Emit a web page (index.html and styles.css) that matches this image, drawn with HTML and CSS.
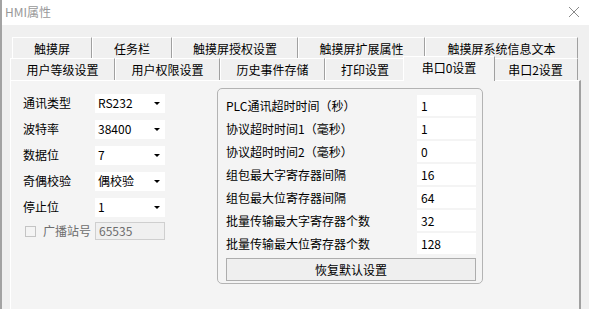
FILE: index.html
```html
<!DOCTYPE html>
<html lang="zh-CN">

<head>
    <meta charset="UTF-8">
    <meta name="viewport" content="width=device-width, initial-scale=1.0">
    <title>HMI属性</title>
    <link rel="stylesheet" href="styles.css">
</head>

<body>
    <div class="window">
        <div class="titlebar">
            <span class="title">HMI属性</span>
            <span class="close">
                <svg width="12" height="12" viewBox="0 0 12 12">
                    <path d="M1 1 L11 11 M11 1 L1 11" stroke="#8a8a8a" stroke-width="1" fill="none" />
                </svg>
            </span>
        </div>

        <div class="content">
            <div class="tabs">
                <div class="tab-row row-back">
                    <div class="tab" style="width: 80px">触摸屏</div>
                    <div class="tab" style="width: 80px">任务栏</div>
                    <div class="tab" style="width: 126px">触摸屏授权设置</div>
                    <div class="tab" style="width: 127px">触摸屏扩展属性</div>
                    <div class="tab" style="width: 153px">触摸屏系统信息文本</div>
                </div>
                <div class="tab-row row-front">
                    <div class="tab" style="width: 105px">用户等级设置</div>
                    <div class="tab" style="width: 105px">用户权限设置</div>
                    <div class="tab" style="width: 105px">历史事件存储</div>
                    <div class="tab" style="width: 80px">打印设置</div>
                    <div class="tab active" style="width: 92px">串口0设置</div>
                    <div class="tab" style="width: 85px">串口2设置</div>
                </div>
            </div>

            <div class="panel">
                <div class="serial-form">
                    <div class="form-row">
                        <label>通讯类型</label>
                        <div class="combo"><span>RS232</span><i class="arrow"></i></div>
                    </div>
                    <div class="form-row">
                        <label>波特率</label>
                        <div class="combo"><span>38400</span><i class="arrow"></i></div>
                    </div>
                    <div class="form-row">
                        <label>数据位</label>
                        <div class="combo"><span>7</span><i class="arrow"></i></div>
                    </div>
                    <div class="form-row">
                        <label>奇偶校验</label>
                        <div class="combo"><span>偶校验</span><i class="arrow"></i></div>
                    </div>
                    <div class="form-row">
                        <label>停止位</label>
                        <div class="combo"><span>1</span><i class="arrow"></i></div>
                    </div>
                    <div class="form-row disabled-row">
                        <label class="check"><span class="checkbox"></span>广播站号</label>
                        <div class="text-box disabled">65535</div>
                    </div>
                </div>

                <div class="group">
                    <div class="group-row">
                        <span>PLC通讯超时时间（秒）</span>
                        <div class="value">1</div>
                    </div>
                    <div class="group-row">
                        <span>协议超时时间1（毫秒）</span>
                        <div class="value">1</div>
                    </div>
                    <div class="group-row">
                        <span>协议超时时间2（毫秒）</span>
                        <div class="value">0</div>
                    </div>
                    <div class="group-row">
                        <span>组包最大字寄存器间隔</span>
                        <div class="value">16</div>
                    </div>
                    <div class="group-row">
                        <span>组包最大位寄存器间隔</span>
                        <div class="value">64</div>
                    </div>
                    <div class="group-row">
                        <span>批量传输最大字寄存器个数</span>
                        <div class="value">32</div>
                    </div>
                    <div class="group-row">
                        <span>批量传输最大位寄存器个数</span>
                        <div class="value">128</div>
                    </div>
                    <button class="reset-btn">恢复默认设置</button>
                </div>
            </div>
        </div>
    </div>
</body>

</html>
```

FILE: styles.css
```css
* {
    margin: 0;
    padding: 0;
    box-sizing: border-box;
}

body {
    font-family: "Noto Sans CJK SC", "Liberation Sans", sans-serif;
    font-size: 12px;
    color: #000;
    background: #f0f0f0;
    width: 589px;
    height: 309px;
    overflow: hidden;
}

.window {
    width: 589px;
    height: 309px;
    background: #f0f0f0;
    border-left: 2px solid #a3a3a3;
    overflow: hidden;
}

.titlebar {
    height: 25px;
    background: #fff;
    display: flex;
    align-items: center;
    justify-content: space-between;
    padding: 0 9px 1px 3px;
}

.title {
    color: #999;
    font-size: 12px;
    line-height: 16px;
}

.close {
    display: flex;
}

.content {
    padding: 12px 0 0 8px;
}

/* tabs */
.tab-row {
    display: flex;
    align-items: flex-end;
}

.row-back {
    height: 21px;
    padding-left: 2px;
}

.row-front {
    height: 22px;
}

.tab {
    height: 100%;
    background: #f0f0f0;
    border-top: 1px solid #fff;
    border-left: 1px solid #fff;
    border-right: 1px solid #a0a0a0;
    display: flex;
    align-items: center;
    justify-content: center;
    line-height: 14px;
    padding-top: 1px;
}

.tab.active {
    height: 25px;
    margin: 0 -2px -1px;
    background: #f4f4f4;
    position: relative;
    z-index: 1;
    padding-bottom: 4px;
}

/* panel */
.panel {
    width: 571px;
    height: 240px;
    background: #f4f4f4;
    border-top: 1px solid #fff;
    border-left: 1px solid #fff;
    border-right: 2px solid #a0a0a0;
    padding: 7px 0 0 12px;
    display: flex;
    gap: 52px;
}

.serial-form {
    width: 142px;
    padding-top: 2px;
}

.form-row {
    height: 26px;
    display: flex;
    align-items: center;
}

.form-row label {
    width: 72px;
    line-height: 14px;
}

.combo {
    width: 70px;
    height: 19px;
    background: #fff;
    display: flex;
    align-items: center;
    justify-content: space-between;
    padding: 0 5px 0 3px;
    line-height: 14px;
}

.arrow {
    width: 0;
    height: 0;
    border-left: 3px solid transparent;
    border-right: 3px solid transparent;
    border-top: 3px solid #000;
}

.disabled-row {
    height: 22px;
}

.check {
    display: flex;
    align-items: center;
    gap: 7px;
    color: #6d6d6d;
    padding-left: 2px;
}

.checkbox {
    width: 11px;
    height: 11px;
    border: 1px solid #c4c4c4;
    background: #f4f4f4;
}

.text-box {
    width: 70px;
    height: 18px;
    padding-left: 3px;
    display: flex;
    align-items: center;
    line-height: 14px;
}

.text-box.disabled {
    background: #f0f0f0;
    border: 1px solid #cfcfcf;
    color: #6d6d6d;
}

/* group box on the right */
.group {
    width: 266px;
    height: 196px;
    border: 1px solid #b3b3b3;
    border-radius: 5px;
    padding: 6px 6px 2px 8px;
    display: flex;
    flex-direction: column;
    gap: 2px;
}

.group-row {
    height: 21px;
    display: flex;
    align-items: center;
    justify-content: space-between;
    line-height: 14px;
}

.value {
    width: 59px;
    height: 21px;
    background: #fff;
    padding-left: 4px;
    display: flex;
    align-items: center;
}

.reset-btn {
    margin-top: 2px;
    height: 23px;
    border: 1px solid #adadad;
    background: #efefef;
    font-family: inherit;
    font-size: 12px;
    color: #000;
    line-height: 14px;
}
```
